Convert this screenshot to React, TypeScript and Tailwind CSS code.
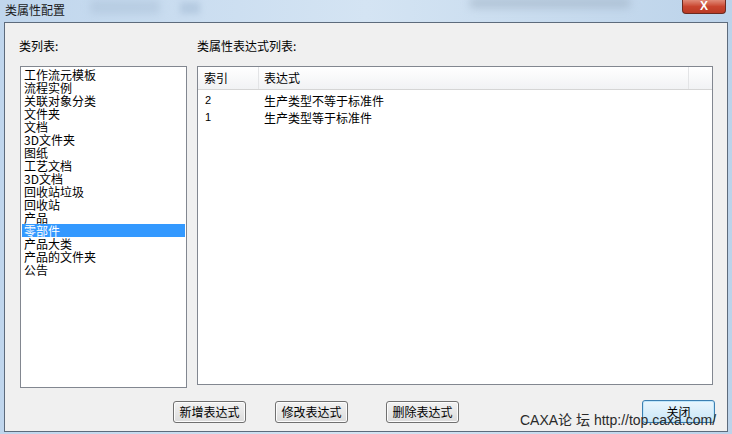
import React from "react";

const classes = [
  "工作流元模板",
  "流程实例",
  "关联对象分类",
  "文件夹",
  "文档",
  "3D文件夹",
  "图纸",
  "工艺文档",
  "3D文档",
  "回收站垃圾",
  "回收站",
  "产品",
  "零部件",
  "产品大类",
  "产品的文件夹",
  "公告",
];

const expressions = [
  { idx: "2", text: "生产类型不等于标准件" },
  { idx: "1", text: "生产类型等于标准件" },
];

const font = { fontFamily: '"Noto Sans CJK SC", "Liberation Sans", sans-serif' };

function Btn({ label, primary }: { label: string; primary?: boolean }) {
  return (
    <div
      className={
        primary
          ? "w-[73px] h-[23px] rounded-[3px] border border-[#3c7fb1] bg-gradient-to-b from-[#eaf6fd] to-[#c9e6f7] shadow-[inset_0_0_0_1px_#bfe6fb] flex items-center justify-center text-[12px] text-black"
          : "w-[73px] h-[22px] rounded-[3px] border border-[#707070] bg-gradient-to-b from-[#f2f2f2] to-[#dcdcdc] shadow-[inset_0_0_0_1px_#fcfcfc] flex items-center justify-center text-[12px] text-black"
      }
    >
      {label}
    </div>
  );
}

export default function App() {
  return (
    <div
      className="relative w-[732px] h-[434px] overflow-hidden flex flex-col bg-gradient-to-r from-[#c0d6ed] via-[#d4e4f3] to-[#bcd3ea]"
      style={font}
    >
      {/* blurred desktop behind the glass title bar */}
      <div className="absolute left-[90px] top-0 w-[70px] h-[14px] bg-[#a9bfd6] blur-[4px] opacity-50" />
      <div className="absolute left-[470px] top-[-2px] w-[160px] h-[10px] bg-[#9fb1c4] blur-[4px] opacity-60" />
      <div className="absolute left-[180px] top-[2px] w-[20px] h-[12px] bg-[#a0b8d2] blur-[3px] opacity-50" />

      {/* title bar */}
      <div className="relative h-[22px] flex items-start">
        <span className="ml-[5px] mt-[2px] text-[12px] leading-[15px] text-[#1a1a1a]">类属性配置</span>
        <div className="absolute left-[682px] top-0 w-[44px] h-[14px] rounded-b-[4px] border border-t-0 border-[#6b2a20] bg-gradient-to-b from-[#e08a78] via-[#c9452f] to-[#b93a25] flex items-center justify-center">
          <span className="text-white text-[12px] font-bold leading-none -mt-[2px]" style={{ fontFamily: '"Liberation Sans", sans-serif' }}>
            X
          </span>
        </div>
      </div>

      <div className="flex flex-1 pl-[4px] pr-[4px] pb-[2px]">
        {/* client area */}
        <div className="relative flex-1 border border-[#5d6b7c] bg-[#f0f0f0] flex flex-col">
          <div className="flex gap-[10px] pl-[15px] pt-[15px]">
            {/* class list */}
            <div className="flex flex-col w-[167px]">
              <div className="text-[12px] leading-[15px] text-black mb-[13px] -ml-[1px]">类列表:</div>
              <div className="h-[322px] border border-[#828790] bg-white pt-[1px] pl-[1px] pr-[1px]">
                {classes.map((c) => (
                  <div
                    key={c}
                    className={
                      c === "零部件"
                        ? "h-[13px] leading-[13px] text-[12px] pl-[2px] bg-[#3399ff] text-white"
                        : "h-[13px] leading-[13px] text-[12px] pl-[2px] text-black"
                    }
                  >
                    {c}
                  </div>
                ))}
              </div>
            </div>

            {/* expression list */}
            <div className="flex flex-col w-[516px]">
              <div className="text-[12px] leading-[15px] text-black mb-[13px]">类属性表达式列表:</div>
              <div className="h-[319px] border border-[#828790] bg-white flex flex-col">
                <div className="h-[23px] flex bg-gradient-to-b from-white to-[#f1f2f4] border-b border-[#d5d5d5] text-[12px] text-black">
                  <div className="w-[61px] pl-[6px] flex items-center border-r border-[#e3e4e6]">索引</div>
                  <div className="w-[430px] pl-[5px] flex items-center border-r border-[#e3e4e6]">表达式</div>
                  <div className="flex-1" />
                </div>
                <div className="pt-[2px]">
                  {expressions.map((e) => (
                    <div key={e.idx} className="h-[17px] flex items-center text-[12px] text-black">
                      <div className="w-[61px] pl-[7px]" style={{ fontFamily: '"Liberation Sans", sans-serif', fontSize: 11 }}>
                        {e.idx}
                      </div>
                      <div className="pl-[5px]">{e.text}</div>
                    </div>
                  ))}
                </div>
              </div>
            </div>
          </div>

          {/* buttons */}
          <div className="flex items-center mt-[12px] pl-[168px]">
            <Btn label="新增表达式" />
            <div className="w-[29px]" />
            <Btn label="修改表达式" />
            <div className="w-[38px]" />
            <Btn label="删除表达式" />
            <div className="w-[183px]" />
            <Btn label="关闭" primary />
          </div>

          {/* forum watermark */}
          <div
            className="absolute left-[515px] top-[389px] text-[14px] leading-[17px] text-[#2a2a2a] whitespace-nowrap"
            style={{ fontFamily: '"Liberation Sans", "Noto Sans CJK SC", sans-serif' }}
          >
            CAXA论 坛 http://top.caxa.com/
          </div>
        </div>
      </div>
    </div>
  );
}
